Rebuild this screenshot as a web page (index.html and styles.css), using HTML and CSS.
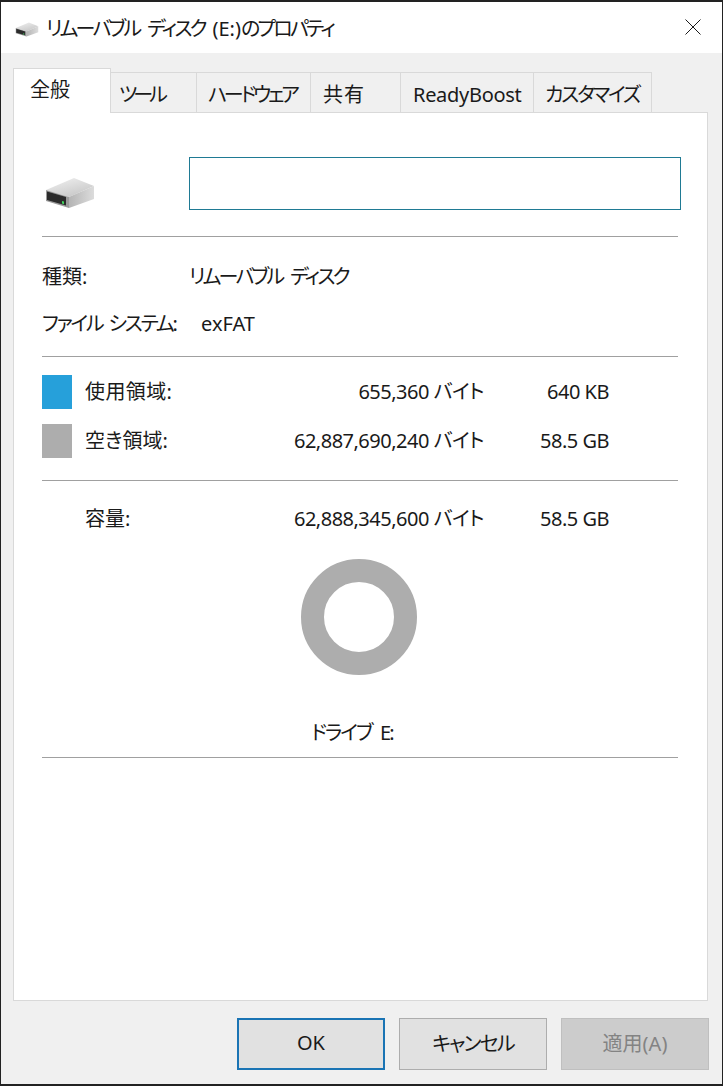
FILE: index.html
```html
<!DOCTYPE html>
<html lang="ja">
<head>
  <meta charset="UTF-8" />
  <title>リムーバブル ディスク (E:)のプロパティ</title>
  <link rel="stylesheet" href="styles.css">
</head>
<body>
  <svg class="defs" width="0" height="0">
    <defs>
      <linearGradient id="topFace" x1="0" y1="0" x2="0.6" y2="1">
        <stop offset="0" stop-color="#f2f2f2" />
        <stop offset="1" stop-color="#c8c8c8" />
      </linearGradient>
      <linearGradient id="sideFace" x1="0" y1="0" x2="1" y2="0">
        <stop offset="0" stop-color="#b4b4b4" />
        <stop offset="1" stop-color="#dcdcdc" />
      </linearGradient>
      <symbol id="drive" viewBox="0 0 50 32">
        <path d="M1 13 29 1 49 9 24 20Z" fill="url(#topFace)" />
        <path d="M24 20 49 9V22L24 31Z" fill="url(#sideFace)" />
        <path d="M1 13 24 20V31L1 24Z" fill="#9a9a9a" />
        <path d="M2 14.500 21 20V28.500L2 23Z" fill="#2b2b2b" />
        <path d="M17 24 19 24.600V27.200L17 26.600Z" fill="#3fd35c" />
      </symbol>
    </defs>
  </svg>

  <div class="window">
    <div class="titlebar">
      <svg class="icon-small"><use href="#drive" /></svg>
      <span class="title">リムーバブル ディスク <span class="title-drive">(E:)</span>のプロパティ</span>
      <svg class="close" viewBox="0 0 16 16"><path d="M0.500 0.500 15.500 15.500M15.500 0.500 0.500 15.500" stroke="#1a1a1a" stroke-width="1" fill="none" /></svg>
    </div>

    <div class="content">
      <div class="tabs">
        <div class="tab active">全般</div>
        <div class="tab tab-tool">ツール</div>
        <div class="tab tab-hw">ハードウェア</div>
        <div class="tab tab-share">共有</div>
        <div class="tab tab-latin">ReadyBoost</div>
        <div class="tab tab-custom">カスタマイズ</div>
      </div>

      <div class="panel">
        <div class="name-row">
          <svg class="icon-large"><use href="#drive" /></svg>
          <div class="name-box"></div>
        </div>

        <div class="section info">
          <div class="info-row"><span class="info-label">種類:</span><span class="kana">リムーバブル ディスク</span></div>
          <div class="info-row"><span class="info-label-fs">ファイル システム:</span><span>exFAT</span></div>
        </div>

        <div class="section usage">
          <div class="usage-row">
            <span class="swatch used"></span>
            <span class="label-wide">使用領域:</span>
            <span class="num">655,360 バイト</span>
            <span class="num">640 KB</span>
          </div>
          <div class="usage-row">
            <span class="swatch free"></span>
            <span>空き領域:</span>
            <span class="num">62,887,690,240 バイト</span>
            <span class="num">58.5 GB</span>
          </div>
        </div>

        <div class="section capacity">
          <div class="usage-row plain">
            <span></span>
            <span>容量:</span>
            <span class="num">62,888,345,600 バイト</span>
            <span class="num">58.5 GB</span>
          </div>
          <div class="donut"></div>
          <div class="drive-label">ドライブ E:</div>
        </div>
      </div>

      <div class="buttons">
        <button class="btn default">OK</button>
        <button class="btn btn-kana">キャンセル</button>
        <button class="btn disabled">適用(A)</button>
      </div>
    </div>
  </div>
</body>
</html>
```

FILE: styles.css
```css
* { box-sizing: border-box; }
html, body { margin: 0; height: 100%; }
body {
  background: #f0f0f0;
  color: #1a1a1a;
  font-family: "Noto Sans", "Noto Sans CJK JP", sans-serif;
  font-size: 20px;
  font-feature-settings: "palt";
  overflow: hidden;
}
.defs { position: absolute; }
.window {
  height: 1086px;
  border: 1px solid #222;
  border-top-width: 2px;
  border-bottom-width: 2px;
  display: flex;
  flex-direction: column;
}

.titlebar {
  height: 51px;
  background: #fff;
  display: flex;
  align-items: center;
  padding: 0 21px 0 14px;
}
.icon-small { width: 24px; height: 15px; margin-top: 4px; }
.title { margin-left: 7px; flex: 1; letter-spacing: -2.7px; word-spacing: 5px; }
.title-drive { letter-spacing: 0; }
.close { width: 16px; height: 16px; margin-top: -2px; }

.content { flex: 1; padding: 15px 14px 14px 12px; display: flex; flex-direction: column; }

.tabs {
  display: grid;
  grid-template-columns: 98px 86px 114px 90px 133px 118px;
  width: 639px;
  height: 44px;
  align-items: end;
}
.tab {
  height: 40px;
  line-height: 44px;
  padding-left: 12px;
  border: 1px solid #d9d9d9;
  border-left: 0;
  border-bottom: 0;
  white-space: nowrap;
}
.tab-tool { padding-left: 8px; letter-spacing: -4px; }
.tab-hw { padding-left: 11px; letter-spacing: -3.2px; }
.tab-share { letter-spacing: 1px; }
.tab-latin { letter-spacing: -0.3px; }
.tab-custom { padding-left: 11px; letter-spacing: -2.2px; }
.tab.active {
  height: 45px;
  line-height: 42px;
  padding-left: 16px;
  margin-bottom: -1px;
  background: #fff;
  border-left: 1px solid #d9d9d9;
  position: relative;
  z-index: 1;
}

.panel {
  flex: 1;
  background: #fff;
  border: 1px solid #d9d9d9;
  padding: 44px 29px 0 28px;
}

.name-row { display: flex; align-items: flex-start; height: 80px; border-bottom: 1px solid #a0a0a0; }
.icon-large { width: 50px; height: 32px; margin: 20px 0 0 3px; }
.name-box {
  width: 492px;
  height: 53px;
  margin-left: 94px;
  margin-right: -3px;
  border: 1px solid #1f7a94;
}

.section { border-bottom: 1px solid #a0a0a0; }
.info { padding-top: 16px; height: 120px; }
.info-row { display: flex; height: 47px; line-height: 47px; }
.info-label { width: 147px; }
.info-label-fs { width: 159px; letter-spacing: -2.2px; word-spacing: 3px; white-space: nowrap; }
.kana { letter-spacing: -2.7px; word-spacing: 5px; }

.usage { height: 124px; padding-top: 18px; }
.usage-row {
  display: grid;
  grid-template-columns: 43px 130px 269px 125px;
  height: 34px;
  line-height: 34px;
  margin-bottom: 15px;
}
.label-wide { letter-spacing: 0.4px; }
.swatch { width: 30px; height: 34px; }
.swatch.used { background: #26a0da; }
.swatch.free { background: #adadad; }
.num { text-align: right; white-space: nowrap; letter-spacing: -0.5px; }

.capacity { height: 277px; padding-top: 21px; }
.plain { margin-bottom: 0; }
.donut {
  width: 116px;
  height: 116px;
  margin: 23px 0 0 259px;
  border: 23px solid #adadad;
  border-radius: 50%;
}
.drive-label { margin: 43px 0 0 269px; line-height: 30px; white-space: nowrap; letter-spacing: -1.9px; word-spacing: 5px; }

.buttons { display: flex; justify-content: flex-end; gap: 14px; margin-top: 17px; margin-right: -1px; }
.btn {
  width: 148px;
  height: 52px;
  padding: 0 0 3px;
  background: #e1e1e1;
  border: 1px solid #adadad;
  color: #1a1a1a;
  font: inherit;
}
.btn-kana { letter-spacing: -1.8px; }
.btn.default { border: 2px solid #1a74b4; }
.btn.disabled { background: #ccc; border-color: #bfbfbf; color: #838383; }
```
